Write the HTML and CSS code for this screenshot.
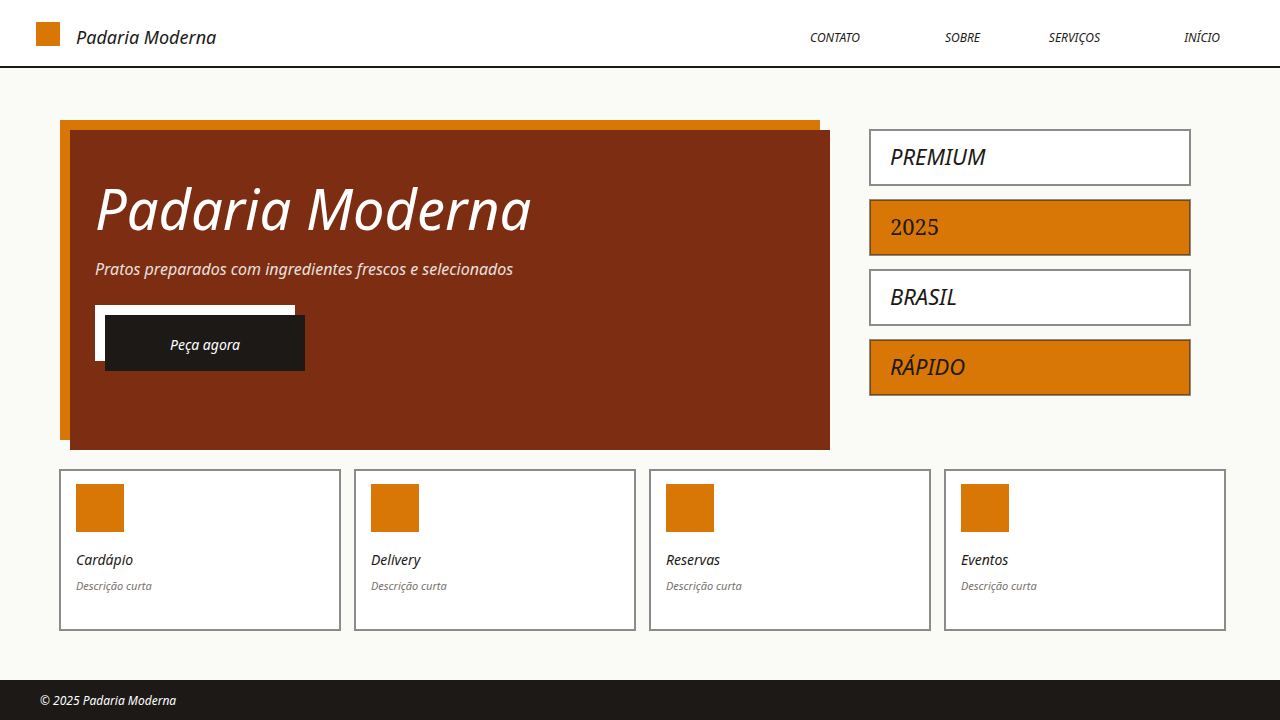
FILE: index.html
```html
<!DOCTYPE html>
<html lang="pt-BR">
<head>
<meta charset="utf-8">
<meta name="viewport" content="width=device-width, initial-scale=1">
<title>Padaria Moderna</title>
<link rel="stylesheet" href="styles.css">
</head>
<body>
<header class="header">
  <a class="brand" href="#"><span class="brand-mark"></span>Padaria Moderna</a>
  <nav class="nav">
    <a href="#contato">CONTATO</a>
    <a href="#sobre">SOBRE</a>
    <a href="#servicos">SERVIÇOS</a>
    <a href="#inicio">INÍCIO</a>
  </nav>
</header>
<main class="main">
  <div class="top">
    <section class="hero">
      <h1 class="hero-title">Padaria Moderna</h1>
      <p class="hero-text">Pratos preparados com ingredientes frescos e selecionados</p>
      <button class="cta" type="button">Peça agora</button>
    </section>
    <ul class="tags">
      <li class="tag">PREMIUM</li>
      <li class="tag tag-accent tag-number">2025</li>
      <li class="tag">BRASIL</li>
      <li class="tag tag-accent">RÁPIDO</li>
    </ul>
  </div>
  <section class="cards">
    <article class="card">
      <div class="card-icon"></div>
      <h2 class="card-title">Cardápio</h2>
      <p class="card-text">Descrição curta</p>
    </article>
    <article class="card">
      <div class="card-icon"></div>
      <h2 class="card-title">Delivery</h2>
      <p class="card-text">Descrição curta</p>
    </article>
    <article class="card">
      <div class="card-icon"></div>
      <h2 class="card-title">Reservas</h2>
      <p class="card-text">Descrição curta</p>
    </article>
    <article class="card">
      <div class="card-icon"></div>
      <h2 class="card-title">Eventos</h2>
      <p class="card-text">Descrição curta</p>
    </article>
  </section>
</main>
<footer class="footer">© 2025 Padaria Moderna</footer>
</body>
</html>
```

FILE: styles.css
```css
:root {
  --ink: #1c1917;
  --accent: #d97706;
  --brown: #7c2d12;
  --paper: #fafaf7;
  --muted: #78716c;
  --line: rgba(28, 25, 23, 0.5);
}

* {
  box-sizing: border-box;
  margin: 0;
  padding: 0;
}

body {
  display: flex;
  flex-direction: column;
  min-height: 100vh;
  background: var(--paper);
  color: var(--ink);
  font-family: "Noto Sans", sans-serif;
  font-style: italic;
}

a {
  color: inherit;
  text-decoration: none;
}

.header {
  display: flex;
  justify-content: space-between;
  padding: 22px 60px 12px 36px;
  background: #fff;
  border-bottom: 2px solid var(--ink);
}

.brand {
  display: flex;
  gap: 16px;
  font-size: 18px;
  line-height: 30px;
}

.brand-mark {
  width: 24px;
  height: 24px;
  background: var(--accent);
}

.nav {
  display: grid;
  grid-template-columns: repeat(4, 120px);
  font-size: 12px;
  line-height: 32px;
  text-align: right;
}

.main {
  flex: 1;
  display: flex;
  flex-direction: column;
  gap: 20px;
  padding: 62px 55px 50px 60px;
}

.top {
  display: grid;
  grid-template-columns: 760fr 320fr;
  gap: 40px;
  padding: 0 35px 0 10px;
}

.hero {
  min-height: 320px;
  padding: 40px 25px;
  background: var(--brown);
  box-shadow: -10px -10px 0 var(--accent);
  color: #fff;
}

.hero-title {
  font-size: 56px;
  font-weight: 400;
  line-height: 76px;
}

.hero-text {
  margin-top: 11px;
  font-size: 16px;
  line-height: 24px;
  opacity: 0.85;
}

.cta {
  width: 200px;
  height: 56px;
  margin: 34px 0 0 10px;
  padding-top: 3px;
  border: 0;
  background: var(--ink);
  box-shadow: -10px -10px 0 #fff;
  color: #fff;
  font: inherit;
  font-size: 14px;
  cursor: pointer;
}

.tags {
  display: flex;
  flex-direction: column;
  gap: 15px;
  list-style: none;
}

.tag,
.card {
  background: #fff;
  box-shadow: 0 0 0 1px var(--line), inset 0 0 0 1px var(--line);
}

.tag {
  padding: 11px 20px 14px;
  font-size: 22px;
  line-height: 30px;
}

.tag-accent {
  background: var(--accent);
}

.tag-number {
  font-family: "Noto Serif", "Droid Serif", serif;
  font-style: normal;
}

.cards {
  display: grid;
  grid-template-columns: repeat(4, 1fr);
  gap: 15px;
}

.card {
  min-height: 160px;
  padding: 14px 16px;
}

.card-icon {
  width: 48px;
  height: 48px;
  background: var(--accent);
}

.card-title {
  margin-top: 18px;
  font-size: 14px;
  font-weight: 400;
  line-height: 20px;
}

.card-text {
  margin-top: 8px;
  color: var(--muted);
  font-size: 11px;
  line-height: 16px;
}

.footer {
  padding: 11px 40px 9px;
  background: var(--ink);
  color: #fff;
  font-size: 12px;
  line-height: 20px;
}
```
